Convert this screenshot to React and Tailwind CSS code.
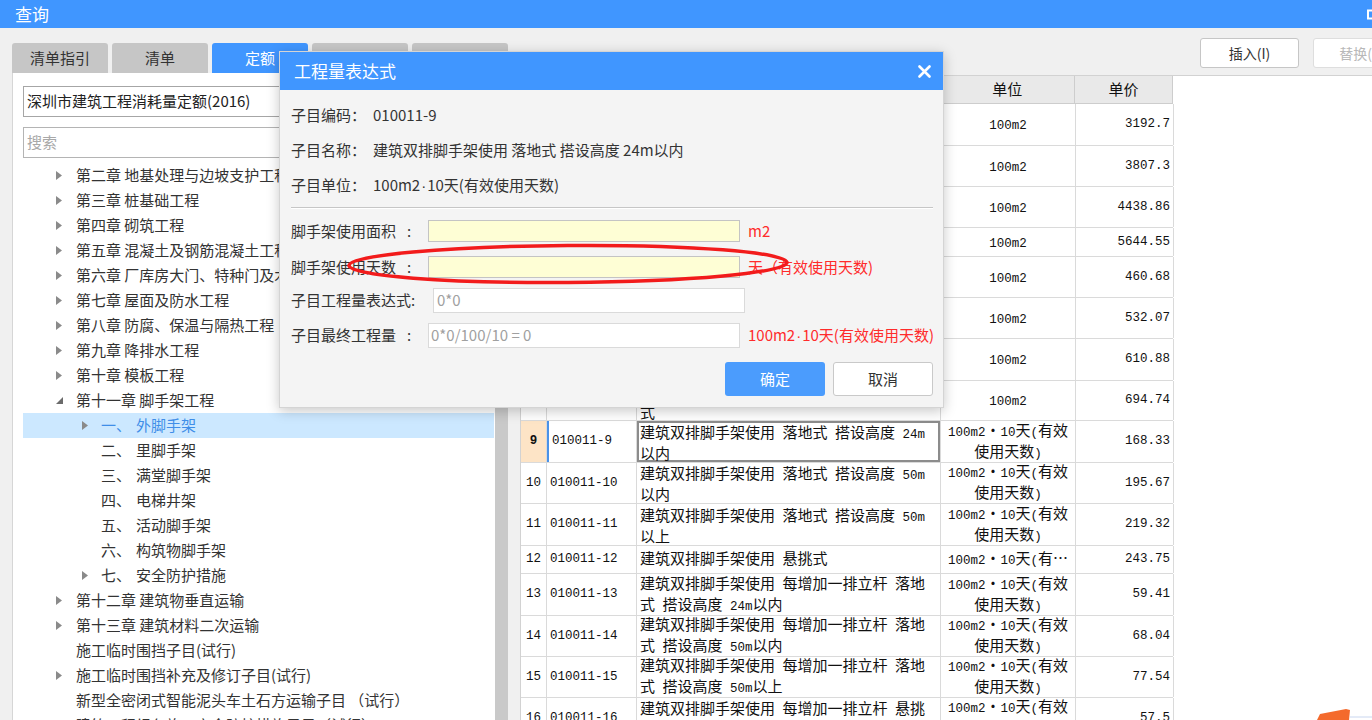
const CJK = "font-['Noto_Sans_CJK_SC',sans-serif]";
const MONO = "font-['Liberation_Mono',monospace] text-[12.5px]";

function Mixed({ text }) {
  return text.split(/([\x20-\x7e]+)/).map((s, i) =>
    /[\x20-\x7e]/.test(s) ? (
      <span key={i} className={MONO}>
        {s}
      </span>
    ) : (
      <span key={i}>{s}</span>
    )
  );
}

// narrow middle dot, the CJK face draws it full width
const Dot = () => <span className="font-['Liberation_Sans',sans-serif] px-[1px]">·</span>;

function Arrow({ type }) {
  if (type === "r")
    return (
      <svg width="6" height="9" viewBox="0 0 6 9">
        <path d="M0 0L6 4.5L0 9Z" fill="#8a8a8a" />
      </svg>
    );
  if (type === "d")
    return (
      <svg width="7" height="7" viewBox="0 0 7 7">
        <path d="M7 0V7H0Z" fill="#6b6b6b" />
      </svg>
    );
  return null;
}

const tree = [
  { t: "第二章 地基处理与边坡支护工程", a: "r" },
  { t: "第三章 桩基础工程", a: "r" },
  { t: "第四章 砌筑工程", a: "r" },
  { t: "第五章 混凝土及钢筋混凝土工程", a: "r" },
  { t: "第六章 厂库房大门、特种门及木结构工程", a: "r" },
  { t: "第七章 屋面及防水工程", a: "r" },
  { t: "第八章 防腐、保温与隔热工程", a: "r" },
  { t: "第九章 降排水工程", a: "r" },
  { t: "第十章 模板工程", a: "r" },
  { t: "第十一章 脚手架工程", a: "d" },
  { sub: true, num: "一、", t: "外脚手架", a: "r", sel: true },
  { sub: true, num: "二、", t: "里脚手架" },
  { sub: true, num: "三、", t: "满堂脚手架" },
  { sub: true, num: "四、", t: "电梯井架" },
  { sub: true, num: "五、", t: "活动脚手架" },
  { sub: true, num: "六、", t: "构筑物脚手架" },
  { sub: true, num: "七、", t: "安全防护措施", a: "r" },
  { t: "第十二章 建筑物垂直运输", a: "r" },
  { t: "第十三章 建筑材料二次运输", a: "r" },
  { t: "施工临时围挡子目(试行)" },
  { t: "施工临时围挡补充及修订子目(试行)", a: "r" },
  { t: "新型全密闭式智能泥头车土石方运输子目 （试行）" },
  { t: "建筑工程绿色施工安全防护措施子目（试行）" },
];

const U2 = ["100m2・10天(有效", "使用天数)"];

const rows = [
  { n: "1", code: "010011-1", name: ["建筑综合脚手架 单层建筑 檐高 6m以内", "檐口"], unit: ["100m2"], price: "3192.7", h: "h-[42px]" },
  { n: "2", code: "010011-2", name: ["建筑综合脚手架 单层建筑 檐高 6m以上", "每增 1m"], unit: ["100m2"], price: "3807.3", h: "h-[41px]" },
  { n: "3", code: "010011-3", name: ["建筑综合脚手架 多层建筑 檐高 20m以内", "檐口"], unit: ["100m2"], price: "4438.86", h: "h-[41px]" },
  { n: "4", code: "010011-4", name: ["建筑综合脚手架 多层建筑"], unit: ["100m2"], price: "5644.55", h: "h-[29px]" },
  { n: "5", code: "010011-5", name: ["建筑单排脚手架 落地式 搭设高度 15m", "以内"], unit: ["100m2"], price: "460.68", h: "h-[41px]" },
  { n: "6", code: "010011-6", name: ["建筑单排脚手架 落地式 搭设高度 24m", "以内"], unit: ["100m2"], price: "532.07", h: "h-[41px]" },
  { n: "7", code: "010011-7", name: ["建筑双排脚手架 落地式 搭设高度 24m", "以内"], unit: ["100m2"], price: "610.88", h: "h-[42px]" },
  { n: "8", code: "010011-8", name: ["建筑双排脚手架 搭设高度 50m以内 悬挑", "式"], unit: ["100m2"], price: "694.74", h: "h-[40px]" },
  { n: "9", code: "010011-9", name: ["建筑双排脚手架使用 落地式 搭设高度 24m", "以内"], unit: U2, price: "168.33", h: "h-[42px]", cur: true },
  { n: "10", code: "010011-10", name: ["建筑双排脚手架使用 落地式 搭设高度 50m", "以内"], unit: U2, price: "195.67", h: "h-[41px]" },
  { n: "11", code: "010011-11", name: ["建筑双排脚手架使用 落地式 搭设高度 50m", "以上"], unit: U2, price: "219.32", h: "h-[42px]" },
  { n: "12", code: "010011-12", name: ["建筑双排脚手架使用 悬挑式"], unit: ["100m2・10天(有…"], price: "243.75", h: "h-[28px]" },
  { n: "13", code: "010011-13", name: ["建筑双排脚手架使用 每增加一排立杆 落地", "式 搭设高度 24m以内"], unit: U2, price: "59.41", h: "h-[42px]" },
  { n: "14", code: "010011-14", name: ["建筑双排脚手架使用 每增加一排立杆 落地", "式 搭设高度 50m以内"], unit: U2, price: "68.04", h: "h-[41px]" },
  { n: "15", code: "010011-15", name: ["建筑双排脚手架使用 每增加一排立杆 落地", "式 搭设高度 50m以上"], unit: U2, price: "77.54", h: "h-[41px]" },
  { n: "16", code: "010011-16", name: ["建筑双排脚手架使用 每增加一排立杆 悬挑", "式"], unit: U2, price: "57.5", h: "h-[41px]" },
];

function Label({ text, w }) {
  return (
    <span className={`${w} shrink-0 whitespace-nowrap flex`}>
      <span>{text}</span>
      {w === "w-[142px]" ? <span>:</span> : <span className="ml-[11px]">:</span>}
    </span>
  );
}

function Dialog() {
  return (
    <div className="absolute left-[279px] top-[51px] w-[665px] h-[357px] bg-[#f4f4f4] border border-[#d4d4d4] shadow-[0_3px_12px_rgba(0,0,0,0.22)] flex flex-col">
      <div className="h-[38px] bg-[#4096ff] flex items-center pl-[14px] pr-[12px] text-white text-[17px] shrink-0">
        <span>工程量表达式</span>
        <svg className="ml-auto" width="13" height="13" viewBox="0 0 13 13">
          <path d="M1.5 1.5L11.5 11.5M11.5 1.5L1.5 11.5" stroke="#fff" strokeWidth="2.6" strokeLinecap="round" />
        </svg>
      </div>
      <div className="pl-[11px] pt-[8px] text-[15px] text-[#333]">
        <div className="h-[35px] flex items-center">
          <span className="w-[82px]">子目编码：</span>
          <span>010011-9</span>
        </div>
        <div className="h-[35px] flex items-center">
          <span className="w-[82px]">子目名称：</span>
          <span>建筑双排脚手架使用 落地式 搭设高度 24m以内</span>
        </div>
        <div className="h-[35px] flex items-center">
          <span className="w-[82px]">子目单位：</span>
          <span>
            100m2<Dot />10天(有效使用天数)
          </span>
        </div>
        <div className="mt-[4px] mr-[10px] h-[2px] border-t border-[#c6c6c6] border-b border-b-white"></div>

        <div className="mt-[11px] h-[22px] flex items-center">
          <Label text="脚手架使用面积" w="w-[137px]" />
          <div className="w-[312px] h-full bg-[#fefed5] border border-[#c4c4c4]"></div>
          <span className="ml-[8px] text-[#ff2b2b]">m2</span>
        </div>
        <div className="mt-[14px] h-[22px] flex items-center">
          <Label text="脚手架使用天数" w="w-[137px]" />
          <div className="w-[312px] h-full bg-[#fefed5] border border-[#c4c4c4]"></div>
          <span className="ml-[8px] text-[#ff2b2b]">天（有效使用天数)</span>
        </div>
        <div className="mt-[10px] h-[25px] flex items-center">
          <Label text="子目工程量表达式" w="w-[142px]" />
          <div className="w-[312px] h-full bg-white border border-[#dadada] flex items-center pl-[3px] text-[#a0a0a0]">0*0</div>
        </div>
        <div className="mt-[10px] h-[25px] flex items-center">
          <Label text="子目最终工程量" w="w-[137px]" />
          <div className="w-[312px] h-full bg-white border border-[#dadada] flex items-center pl-[2px] text-[#a0a0a0] whitespace-pre">0*0/100/10 = 0</div>
          <span className="ml-[8px] text-[#ff2b2b] whitespace-nowrap">
            100m2<Dot />10天(有效使用天数)
          </span>
        </div>
        <div className="mt-[14px] flex justify-end gap-[8px] pr-[10px]">
          <button className="w-[100px] h-[34px] rounded-[3px] bg-[#4b9cfd] text-white text-[15px]">确定</button>
          <button className="w-[100px] h-[34px] rounded-[3px] bg-white border border-[#c9c9c9] text-[#333] text-[15px]">取消</button>
        </div>
      </div>
    </div>
  );
}

export default function App() {
  return (
    <div className={`relative w-[1372px] h-[720px] overflow-hidden bg-[#f0f0f0] ${CJK}`}>
      {/* window title */}
      <div className="h-[28px] bg-[#4096ff] flex items-center pl-[15px] text-white text-[17px]">
        <span>查询</span>
        <svg className="ml-auto mr-[-7px]" width="12" height="11" viewBox="0 0 12 11">
          <rect x="1" y="1.5" width="10" height="8" fill="none" stroke="#fff" strokeWidth="2" />
        </svg>
      </div>

      <div className="flex items-start">
        {/* left: tabs + tree */}
        <div className="pl-[12px] pt-[15px] w-[508px] shrink-0">
          <div className="flex gap-[4px] h-[30px]">
            {["清单指引", "清单", "定额", "", ""].map((t, i) => (
              <div
                key={i}
                className={`w-[96px] h-full rounded-t-[3px] flex items-center justify-center text-[15px] ${
                  i === 2 ? "bg-[#4096ff] text-white" : "bg-[#c6c6c6] text-[#333]"
                }`}
              >
                {t}
              </div>
            ))}
          </div>
          <div className="h-[700px] bg-white border-l border-[#d6d6d6] pl-[10px] pt-[13px]">
            <div className="w-[471px] h-[31px] border border-[#a6a6a6] flex items-center pl-[3px] text-[15px] text-[#222]">
              深圳市建筑工程消耗量定额(2016)
            </div>
            <div className="mt-[10px] w-[471px] h-[31px] border border-[#b4b4b4] flex items-center pl-[3px] text-[15px] text-[#a8a8a8]">
              搜索
            </div>
            <div className="mt-[5px] flex">
              <div className="w-[471px]">
                {tree.map((r, i) => (
                  <div
                    key={i}
                    className={`h-[25px] flex items-center text-[15px] whitespace-nowrap ${
                      r.sel ? "bg-[#cce8ff] text-[#3f8ee8]" : "text-[#333]"
                    }`}
                  >
                    {r.sub ? (
                      <>
                        <div className="w-[78px] pl-[59px] shrink-0 flex items-center">
                          <Arrow type={r.a} />
                        </div>
                        <span className="w-[35px] shrink-0">{r.num}</span>
                        <span>{r.t}</span>
                      </>
                    ) : (
                      <>
                        <div className="w-[53px] pl-[33px] shrink-0 flex items-center">
                          <Arrow type={r.a} />
                        </div>
                        <span>{r.t}</span>
                      </>
                    )}
                  </div>
                ))}
              </div>
              <div className="ml-[1px] w-[13px] h-[600px] bg-[#c9c9c9]"></div>
            </div>
          </div>
        </div>

        {/* right: buttons + table */}
        <div className="ml-[12px] flex-1 min-w-0">
          <div className="h-[47px] pt-[10px] pl-[680px] flex gap-[14px]">
            <button className="w-[99px] h-[30px] shrink-0 rounded-[3px] bg-white border border-[#c6c6c6] text-[14px] text-[#333]">
              插入(I)
            </button>
            <button className="w-[99px] h-[30px] shrink-0 rounded-[3px] bg-white border border-[#dedede] text-[14px] text-[#b8b8b8]">
              替换(R)
            </button>
          </div>
          <div className="h-[700px] bg-white border-t border-[#d2d2d2] flex">
            <div className="w-[653px] shrink-0 border-l border-[#d2d2d2] text-[15px] text-[#111]">
              <div className="h-[28px] flex bg-[#e9e9e9] border-b border-[#cdcdcd]">
                <div className="w-[26px] border-r border-[#cdcdcd]"></div>
                <div className="w-[90px] border-r border-[#cdcdcd] flex items-center justify-center">编码</div>
                <div className="w-[304px] border-r border-[#cdcdcd] flex items-center justify-center">名称</div>
                <div className="w-[135px] border-r border-[#cdcdcd] flex items-center justify-center">单位</div>
                <div className="w-[98px] border-r border-[#cdcdcd] flex items-center justify-center">单价</div>
              </div>
              {rows.map((r) => (
                <div key={r.n} className={`${r.h} flex border-b border-[#dadada]`}>
                  <div
                    className={`w-[26px] shrink-0 border-r border-[#dadada] flex items-center justify-center ${MONO} ${
                      r.cur ? "bg-[#fde4c6] font-bold" : ""
                    }`}
                  >
                    {r.n}
                  </div>
                  <div
                    className={`w-[90px] shrink-0 border-r border-[#dadada] flex items-center pl-[3px] ${MONO} ${
                      r.cur ? "border-l-2 border-l-[#4a92e8] pl-[1px]" : ""
                    }`}
                  >
                    {r.code}
                  </div>
                  <div
                    className={`w-[304px] shrink-0 border-r border-[#dadada] flex flex-col justify-center pl-[3px] leading-[17px] whitespace-nowrap ${
                      r.cur ? "shadow-[inset_0_0_0_2px_#8c8c8c]" : ""
                    }`}
                  >
                    {r.name.map((l, i) => (
                      <div key={i}>
                        <Mixed text={l} />
                      </div>
                    ))}
                  </div>
                  <div className="w-[135px] shrink-0 border-r border-[#dadada] flex flex-col items-center justify-center leading-[17px] whitespace-nowrap">
                    {r.unit.map((l, i) => (
                      <div key={i}>
                        <Mixed text={l} />
                      </div>
                    ))}
                  </div>
                  <div className={`w-[98px] shrink-0 border-r border-[#dadada] flex items-center justify-end pr-[3px] ${MONO}`}>
                    {r.price}
                  </div>
                </div>
              ))}
            </div>
            <div className="flex-1"></div>
          </div>
        </div>
      </div>

      <Dialog />

      {/* red annotation ellipse */}
      <svg className="absolute left-[340px] top-[238px]" width="456" height="52" viewBox="0 0 456 52">
        <ellipse cx="228" cy="26" rx="219" ry="18.5" fill="none" stroke="#f21b1b" strokeWidth="3.5" transform="rotate(-0.4 228 26)" />
      </svg>

      {/* orange mark bottom right */}
      <svg className="absolute left-[1316px] top-[706px]" width="56" height="14" viewBox="0 0 56 14">
        <path d="M1 14L4 8L30 3L34 4L33 14Z" fill="#f46a2c" />
        <path d="M34 11H56" stroke="#c9d6ef" strokeWidth="1" />
      </svg>
    </div>
  );
}
